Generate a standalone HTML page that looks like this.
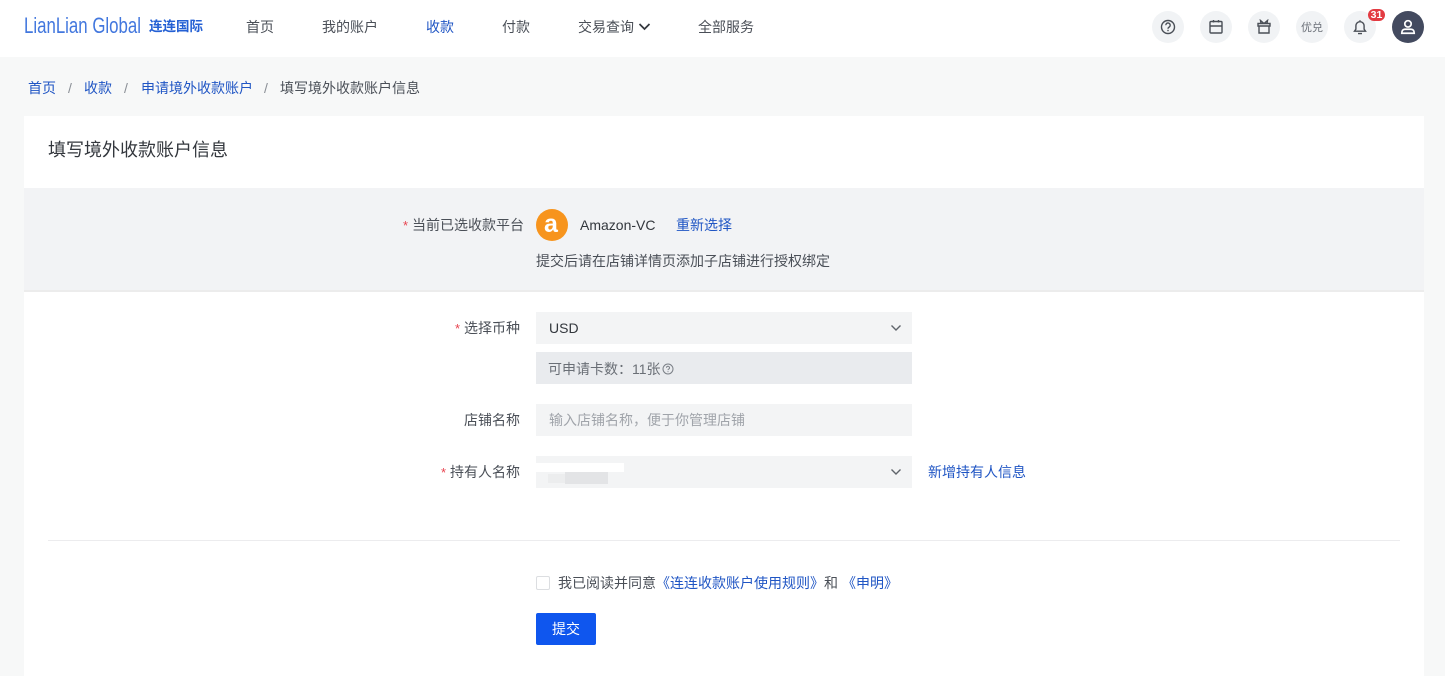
<!DOCTYPE html>
<html lang="zh">
<head>
<meta charset="utf-8">
<title>填写境外收款账户信息</title>
<style>
*{box-sizing:border-box}
html,body{margin:0;padding:0}
body{width:1445px;height:676px;overflow:hidden;position:relative;background:#f7f8f8;font-family:"Liberation Sans","Noto Sans CJK SC",sans-serif;font-size:14px;color:#4a4f57}
.a{position:absolute;white-space:nowrap;line-height:20px}
.blue{color:#1f55c4}
.round{position:absolute;top:11px;width:32px;height:32px;border-radius:50%;background:#f1f3f5;display:flex;align-items:center;justify-content:center}
.req{color:#e8434f;font-size:13px}
.box{position:absolute;left:536px;width:376px;height:32px;background:#f3f4f5}
.lab{position:absolute;white-space:nowrap;line-height:20px;text-align:right;right:925px}
</style>
</head>
<body>
<!-- header -->
<div style="position:absolute;left:0;top:0;width:1445px;height:57px;background:#fff"></div>
<div class="a" style="left:24px;top:13px;font-size:22px;line-height:26px;color:#4277de;transform-origin:0 50%;transform:scaleX(.765)">LianLian Global</div>
<div class="a" style="left:149px;top:17px;font-size:13.5px;font-weight:700;color:#2460d4">连连国际</div>
<div class="a" style="left:246px;top:17px">首页</div>
<div class="a" style="left:322px;top:17px">我的账户</div>
<div class="a blue" style="left:426px;top:17px">收款</div>
<div class="a" style="left:502px;top:17px">付款</div>
<div class="a" style="left:578px;top:17px">交易查询</div>
<svg style="position:absolute;left:638px;top:22px" width="13" height="10" viewBox="0 0 13 10"><path d="M1.5 2l5 5 5-5" fill="none" stroke="#33373d" stroke-width="1.7"/></svg>
<div class="a" style="left:698px;top:17px">全部服务</div>

<div class="round" style="left:1152px"><svg width="16" height="16" viewBox="0 0 16 16" fill="none" stroke="#4a4f57" stroke-width="1.4"><circle cx="8" cy="8" r="6.5"/><path d="M5.8 6.2a2.200 2.200 0 1 1 3.400 1.800c-.8.500-1.200.9-1.200 1.800"/><path d="M8 10.800v1.400"/></svg></div>
<div class="round" style="left:1200px"><svg width="16" height="16" viewBox="0 0 16 16" fill="none" stroke="#4a4f57" stroke-width="1.4"><rect x="2" y="2.500" width="12" height="11.500" rx="1"/><path d="M2 7h12M5.500 1v2.500M10.500 1v2.500"/></svg></div>
<div class="round" style="left:1248px"><svg width="16" height="16" viewBox="0 0 16 16" fill="none" stroke="#4a4f57" stroke-width="1.4"><path d="M3 7v7h10V7M2 4.500h12V7H2zM5 4.500L4.500 1.500 8 4.500l3.500-3-.5 3"/></svg></div>
<div class="round" style="left:1296px;font-size:11px;color:#6b7078">优兑</div>
<div class="round" style="left:1344px"><svg width="16" height="16" viewBox="0 0 16 16" fill="none" stroke="#4a4f57" stroke-width="1.4"><path d="M2.500 12.200h11l-1.400-2V6.800a4.100 4.100 0 0 0-8.200 0v3.400zM6 14.600h4M8 1.300v1.400"/></svg></div>
<div class="a" style="left:1368px;top:9px;width:17px;height:12px;border-radius:6px;background:#e33b42;color:#fff;font-size:10.500px;line-height:12px;font-weight:700;text-align:center">31</div>
<div class="round" style="left:1392px;background:#434a5f"><svg width="16" height="16" viewBox="0 0 18 18" fill="none" stroke="#fff" stroke-width="1.900"><circle cx="9" cy="5.500" r="3.600"/><path d="M2 16c0-3 1.500-4.500 3.500-4.500h7c2 0 3.500 1.500 3.500 4.500z"/></svg></div>

<!-- breadcrumb -->
<div class="a blue" style="left:28px;top:78px">首页</div>
<div class="a" style="left:68px;top:78px;color:#8a8f96">/</div>
<div class="a blue" style="left:84px;top:78px">收款</div>
<div class="a" style="left:124px;top:78px;color:#8a8f96">/</div>
<div class="a blue" style="left:141px;top:78px">申请境外收款账户</div>
<div class="a" style="left:264px;top:78px;color:#8a8f96">/</div>
<div class="a" style="left:280px;top:78px">填写境外收款账户信息</div>

<!-- card -->
<div style="position:absolute;left:24px;top:116px;width:1400px;height:560px;background:#fff"></div>
<div class="a" style="left:48px;top:138px;font-size:18px;line-height:24px;color:#33373d">填写境外收款账户信息</div>

<div style="position:absolute;left:24px;top:188px;width:1400px;height:104px;background:#f2f3f5;border-bottom:2px solid #ececec"></div>
<div class="lab" style="top:215px;right:921px"><span class="req">*</span> 当前已选收款平台</div>
<div style="position:absolute;left:536px;top:209px;width:32px;height:32px;border-radius:50%;background:#f7941d;color:#fff;font-size:25px;font-weight:700;line-height:31px;text-align:center;padding-right:2px">a</div>
<div class="a" style="left:580px;top:215px;color:#33373d">Amazon-VC</div>
<div class="a blue" style="left:676px;top:215px">重新选择</div>
<div class="a" style="left:536px;top:251px">提交后请在店铺详情页添加子店铺进行授权绑定</div>

<!-- form -->
<div class="lab" style="top:318px"><span class="req">*</span> 选择币种</div>
<div class="box" style="top:312px"></div>
<div class="a" style="left:549px;top:318px;color:#33373d">USD</div>
<svg style="position:absolute;left:890px;top:324px" width="12" height="8" viewBox="0 0 12 8"><path d="M1.500 1.500l4.500 4.500 4.500-4.500" fill="none" stroke="#5f646b" stroke-width="1.400"/></svg>

<div class="box" style="top:352px;background:#e9ebee"></div>
<div class="a" style="left:548px;top:359px;color:#6a6f76">可申请卡数：11张</div>
<svg style="position:absolute;left:662px;top:363px" width="12" height="12" viewBox="0 0 12 12" fill="none" stroke="#7a7f86"><circle cx="6" cy="6" r="5"/><path d="M4.500 4.800a1.500 1.500 0 1 1 2.200 1.300c-.5.300-.7.500-.7 1M6 8.300v.8"/></svg>

<div class="lab" style="top:410px">店铺名称</div>
<div class="box" style="top:404px"></div>
<div class="a" style="left:549px;top:410px;color:#a0a4aa">输入店铺名称，便于你管理店铺</div>

<div class="lab" style="top:462px"><span class="req">*</span> 持有人名称</div>
<div class="box" style="top:456px"></div>
<div style="position:absolute;left:536px;top:463px;width:88px;height:9px;background:#fff"></div>
<div style="position:absolute;left:548px;top:474px;width:17px;height:9px;background:#ecedee"></div>
<div style="position:absolute;left:565px;top:472px;width:43px;height:12px;background:#e3e4e6"></div>
<svg style="position:absolute;left:890px;top:468px" width="12" height="8" viewBox="0 0 12 8"><path d="M1.500 1.500l4.500 4.500 4.500-4.500" fill="none" stroke="#5f646b" stroke-width="1.400"/></svg>
<div class="a blue" style="left:928px;top:462px">新增持有人信息</div>

<div style="position:absolute;left:48px;top:540px;width:1352px;height:1px;background:#ececee"></div>

<div style="position:absolute;left:536px;top:576px;width:14px;height:14px;border:1px solid #dcdee1;border-radius:2px;background:#fff"></div>
<div class="a" style="left:558px;top:573px">我已阅读并同意</div>
<div class="a blue" style="left:656px;top:573px">《连连收款账户使用规则》</div>
<div class="a" style="left:824px;top:573px">和</div>
<div class="a blue" style="left:842px;top:573px">《申明》</div>

<div style="position:absolute;left:536px;top:613px;width:60px;height:32px;background:#0f56ee;border-radius:2px;color:#fff;text-align:center;line-height:32px">提交</div>
</body>
</html>
